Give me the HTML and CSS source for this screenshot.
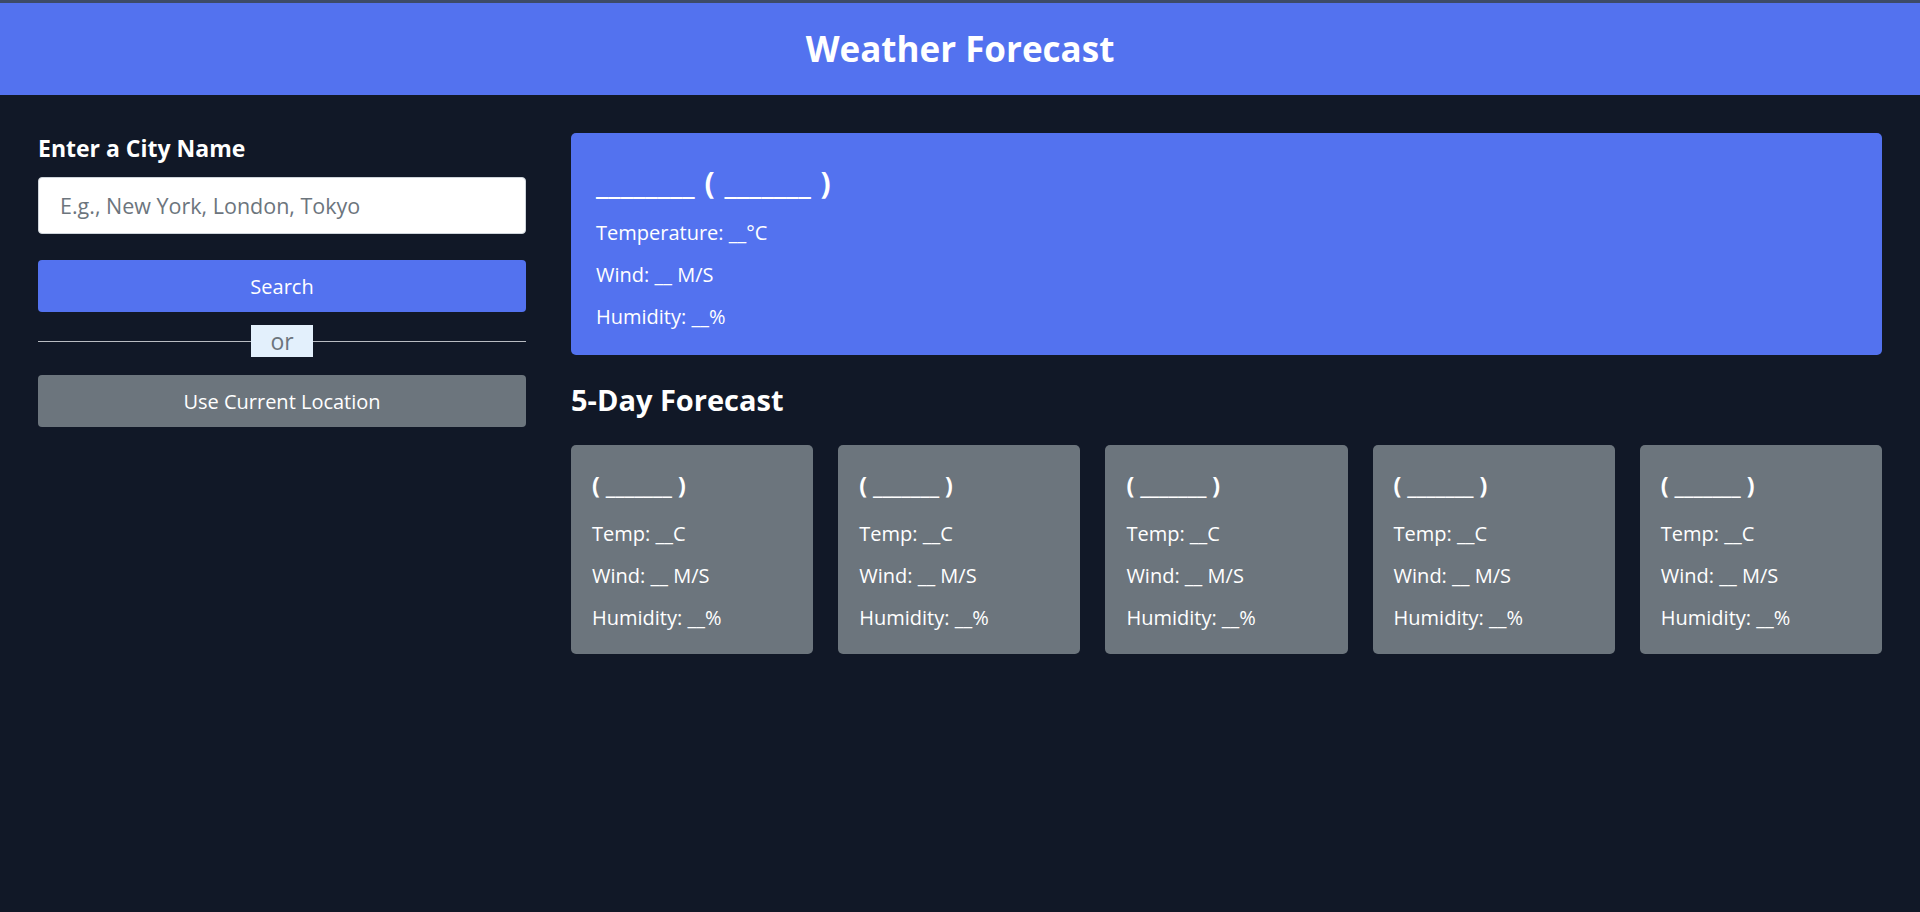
FILE: index.html
```html
<!DOCTYPE html>
<html lang="en">
<head>
<meta charset="utf-8">
<title>Weather Forecast</title>
<link rel="stylesheet" href="styles.css">
</head>
<body>
<header class="topbar">
  <h1 class="title">Weather Forecast</h1>
</header>
<main class="layout">
  <section class="sidebar">
    <label class="label" for="city">Enter a City Name</label>
    <input id="city" class="city-input" type="text" placeholder="E.g., New York, London, Tokyo">
    <button class="btn btn-primary" type="button">Search</button>
    <div class="divider"><span class="divider-text">or</span></div>
    <button class="btn btn-secondary" type="button">Use Current Location</button>
  </section>
  <section class="content">
    <div class="current">
      <h2 class="current-title">________ ( _______ )</h2>
      <p class="line">Temperature: __°C</p>
      <p class="line">Wind: __ M/S</p>
      <p class="line">Humidity: __%</p>
    </div>
    <h2 class="section-title">5-Day Forecast</h2>
    <ul class="cards">
      <li class="card"><h3 class="card-title">( _______ )</h3><p class="line">Temp: __C</p><p class="line">Wind: __ M/S</p><p class="line">Humidity: __%</p></li>
      <li class="card"><h3 class="card-title">( _______ )</h3><p class="line">Temp: __C</p><p class="line">Wind: __ M/S</p><p class="line">Humidity: __%</p></li>
      <li class="card"><h3 class="card-title">( _______ )</h3><p class="line">Temp: __C</p><p class="line">Wind: __ M/S</p><p class="line">Humidity: __%</p></li>
      <li class="card"><h3 class="card-title">( _______ )</h3><p class="line">Temp: __C</p><p class="line">Wind: __ M/S</p><p class="line">Humidity: __%</p></li>
      <li class="card"><h3 class="card-title">( _______ )</h3><p class="line">Temp: __C</p><p class="line">Wind: __ M/S</p><p class="line">Humidity: __%</p></li>
    </ul>
  </section>
</main>
</body>
</html>
```

FILE: styles.css
```css
* { box-sizing: border-box; }
html, body { margin: 0; padding: 0; }
body {
  background: #111827;
  color: #ffffff;
  font-family: "Open Sans", "Noto Sans", sans-serif;
  min-height: 912px;
  border-top: 3px solid #3d4b68;
}
.topbar {
  background: #5372ef;
  height: 92px;
  display: flex;
  align-items: center;
  justify-content: center;
}
.title {
  margin: 0;
  font-size: 35px;
  font-weight: 700;
  line-height: 1.2;
}
.layout {
  display: grid;
  grid-template-columns: 488px 1fr;
  column-gap: 45px;
  padding: 38px 38px 0 38px;
  align-items: start;
}
.sidebar {
  display: flex;
  flex-direction: column;
}
.label {
  font-size: 23px;
  font-weight: 700;
  line-height: 30px;
  margin-bottom: 14px;
}
.city-input {
  height: 57px;
  border: 1px solid #ced4da;
  border-radius: 4px;
  padding: 0 21px;
  font-family: inherit;
  font-size: 21.5px;
  color: #495057;
  background: #fff;
}
.city-input::placeholder { color: #6c757d; }
.btn {
  height: 52px;
  border: none;
  border-radius: 4px;
  color: #fff;
  font-family: inherit;
  font-size: 20px;
}
.btn-primary { background: #5372ef; margin-top: 26px; }
.btn-secondary { background: #6c757d; margin-top: 18px; }
.divider {
  margin-top: 13px;
  height: 32px;
  display: flex;
  align-items: center;
  justify-content: center;
  background: linear-gradient(#b9bcc2, #b9bcc2) left 50% / 100% 1px no-repeat;
}
.divider-text {
  background: #e3f0fc;
  color: #6c757d;
  width: 62px;
  height: 32px;
  display: flex;
  align-items: center;
  justify-content: center;
  font-size: 23px;
  line-height: 1;
}
.current {
  background: #5372ef;
  border-radius: 5px;
  padding: 32px 25px 23px;
}
.current-title {
  margin: 0 0 17px;
  font-size: 30px;
  font-weight: 700;
  line-height: 1.2;
  word-spacing: 2px;
}
.line {
  margin: 0 0 12px;
  font-size: 20px;
  line-height: 30px;
}
.line:last-child { margin-bottom: 0; }
.section-title {
  margin: 28px 0 27px;
  font-size: 29px;
  font-weight: 700;
  line-height: 1.2;
}
.cards {
  list-style: none;
  margin: 0;
  padding: 0;
  display: grid;
  grid-template-columns: repeat(5, 1fr);
  gap: 25px;
}
.card {
  background: #6c757d;
  border-radius: 5px;
  padding: 27.5px 21px 21px;
}
.card-title {
  margin: 0 0 19px;
  font-size: 23px;
  font-weight: 700;
  line-height: 1.2;
}
```
